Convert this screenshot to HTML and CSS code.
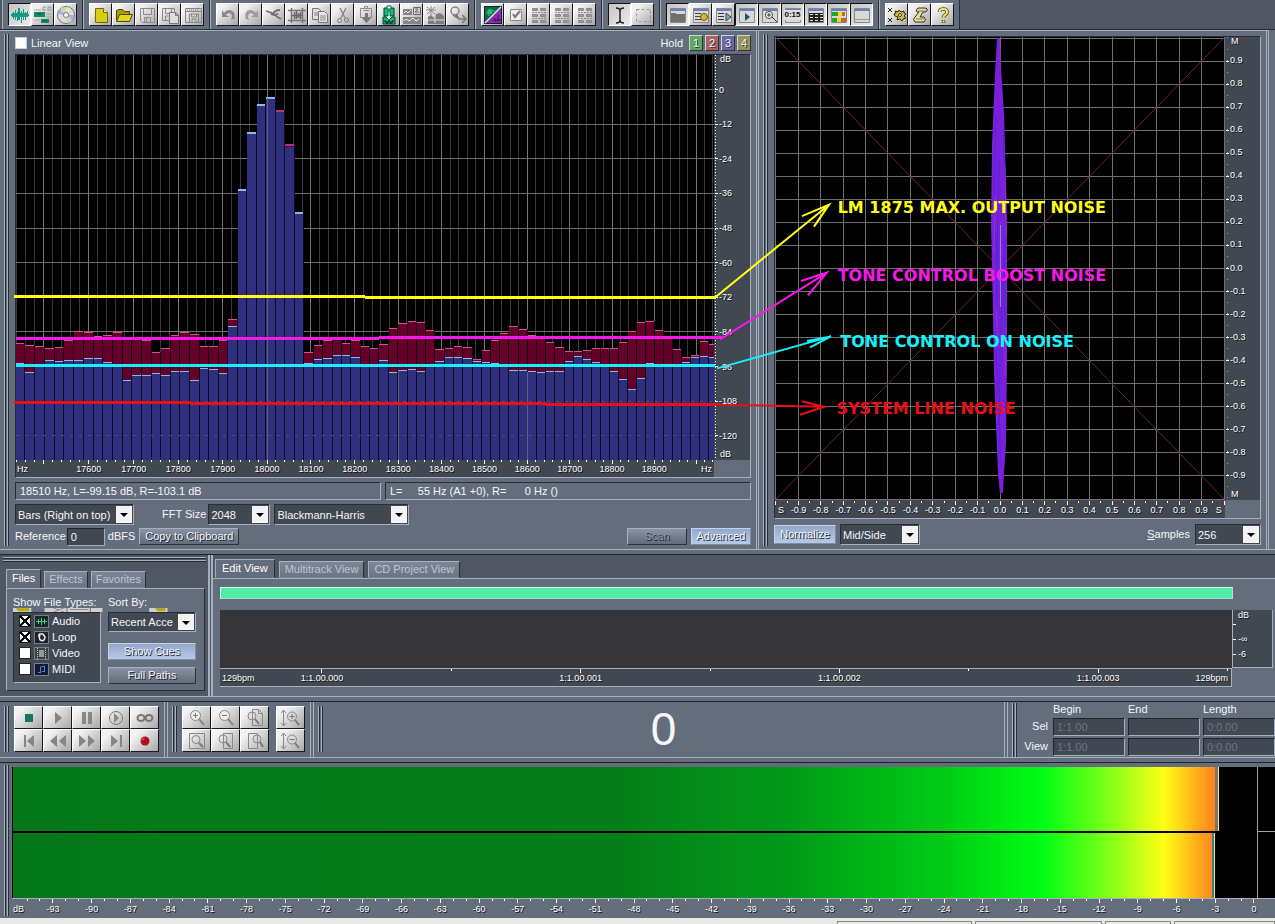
FILE: index.html
```html
<!DOCTYPE html>
<html lang="en">
<head>
<meta charset="utf-8">
<title>Audio Editor</title>
<link rel="stylesheet" href="styles.css">
</head>
<body>
<svg class="sprite" aria-hidden="true">
  <defs>
    <symbol id="wave" viewBox="0 0 20 20"><path d="M1 9h18v2H1zM3 7h1v7H3zM5 5h1v10H5zM7 7h1v9H7zM8 3h2v12H8zM11 6h1v12h-1zM13 4h1v11h-1zM15 7h1v8h-1zM17 6h1v6h-1zM2 8h16v4H2z" fill="#159a86"/></symbol>
    <symbol id="tracks" viewBox="0 0 20 20"><path d="M1 7h11v5H1zM8 14h8v4H8z" fill="#128a70"/><path d="M4 9h5M10 16h4" stroke="#06503e"/><path d="M10 2h3M10 5h3M10 2v3M15 2h3v3h-3z" stroke="#999" fill="none"/><path d="M1 5h7M13 9h6M13 12h6M1 15h6M17 16h2" stroke="#aaa"/></symbol>
    <symbol id="cd" viewBox="0 0 20 20"><circle cx="10" cy="10" r="8.500" fill="#ddd" stroke="#777"/><path d="M10 10L4 4A8 8 0 0 1 9 2z" fill="#a9e8a5"/><path d="M10 10L16 16A8 8 0 0 1 11 18z" fill="#aee5b0"/><path d="M10 10L2 9A8 8 0 0 1 4 5z" fill="#b7a4ef"/><path d="M10 10L18 10A8 8 0 0 1 16 15z" fill="#b4a3ee"/><path d="M10 10L11 2A8 8 0 0 1 15 4z" fill="#eee9a5"/><circle cx="10" cy="10" r="2.500" fill="#fff" stroke="#777"/></symbol>
    <symbol id="new" viewBox="0 0 20 20"><path d="M4.500 3.500h8l4 4v10h-12z" fill="#d8cc16" stroke="#716a00"/><path d="M12.500 3.500v4h4" fill="#fff9a0" stroke="#716a00"/></symbol>
    <symbol id="open" viewBox="0 0 20 20"><path d="M2.500 15.500v-10l2-1h4l2 2h5v3" fill="#a89c00" stroke="#4c4700"/><path d="M2.500 16.500l3-7h13l-3 7z" fill="#e0d61c" stroke="#4c4700"/></symbol>
    <symbol id="save" viewBox="0 0 20 20"><path d="M3.500 3.500h14v14h-12l-2-2zM6.500 3.500v6h8v-6M7.500 17.500v-5h6v5M9.500 13v4" fill="none" stroke="#8b8b8b"/></symbol>
    <symbol id="saveas" viewBox="0 0 20 20"><path d="M8.500 15.500h-6v-12h12v3M5.500 3.500v5h6v-5M5.500 15v-4h3" fill="none" stroke="#888"/><path d="M9.500 7.500h6l3 3v8h-9zM15.500 7.500v3h3" fill="#ddd" stroke="#777"/></symbol>
    <symbol id="saveall" viewBox="0 0 20 20"><path d="M2.500 3.500h16v14h-16zM2 6.500h16M6.500 17v-8h9v8M8.500 9v3h5v-3M9 17v-3h4v3" fill="none" stroke="#888"/><path d="M4 5h12" stroke="#666" stroke-dasharray="1 1"/></symbol>
    <symbol id="undo" viewBox="0 0 20 20"><path d="M4 5v7h7l-3-2c3-4 8-1 5 5l3-1c3-8-5-12-10-6z" fill="#8a8a8a"/></symbol>
    <symbol id="redo" viewBox="0 0 20 20"><path d="M17 5v7h-7l3-2c-3-4-8-1-5 5l-3-1c-3-8 5-12 10-6z" fill="#9b9b9b"/></symbol>
    <symbol id="repeat" viewBox="0 0 20 20"><path d="M2 6l6 2 4 3 5 3" fill="none" stroke="#707070" stroke-width="1.500"/><path d="M16 5q-6 0-7 5M7 8.500q3 3 7 0" fill="none" stroke="#707070" stroke-width="2"/></symbol>
    <symbol id="trim" viewBox="0 0 20 20"><path d="M1 5.500h18M1 15.500h18M4.500 3v15M15.500 3v15" stroke="#777" stroke-width="1.500"/><path d="M5 10.500h10M7.500 7v7M9.500 6v8M11.500 8v5M13.500 7v7" stroke="#666" stroke-width="1.500"/></symbol>
    <symbol id="copy" viewBox="0 0 20 20"><path d="M2.500 3.500h6l3 3v8h-9z" fill="#ddd" stroke="#777"/><path d="M8.500 6.500h6l3 3v8h-9z" fill="#e8e8e8" stroke="#777"/><path d="M4 8h4M4 10h4M10 11h6M10 13h6M10 15h6" stroke="#888"/></symbol>
    <symbol id="cut" viewBox="0 0 20 20"><path d="M7 3l5 10M13 3L8 13" stroke="#888" stroke-width="1.400"/><circle cx="6.500" cy="15.500" r="2" fill="none" stroke="#777"/><circle cx="13.500" cy="15" r="2" fill="none" stroke="#777"/></symbol>
    <symbol id="paste" viewBox="0 0 20 20"><path d="M4.500 3.500h11v9h-11zM7 5.500h6M8.500 3V1.500h3V3" fill="none" stroke="#888"/><path d="M9 8h3v5h3l-4.500 5L6 13h3z" fill="#777"/></symbol>
    <symbol id="pastenew" viewBox="0 0 20 20"><path d="M5 3h10v8H5zM4 12h12v7H4z" fill="#12bf75" stroke="#033c24"/><path d="M8 1h4v3H8zM9 6h2v5h3l-4 4-4-4h3z" fill="#fff" stroke="#064"/><path d="M5 16h2v2h2v-2h2v2h2v-2h2" fill="none" stroke="#012"/></symbol>
    <symbol id="mixpaste" viewBox="0 0 20 20"><path d="M1 4h9v6H1zM1 12h18v7H1z" fill="#858585"/><path d="M2 8l2-2 2 2 3-3M2 16l2-2 3 2 4-3 3 3 3-2" stroke="#eee" fill="none"/><path d="M11.500 2.500h7v7h-7zM13 4h3l-3 3h4" fill="none" stroke="#666"/></symbol>
    <symbol id="deletesel" viewBox="0 0 20 20"><path d="M6 1v9M1 5h10M2 2l8 7M10 2L2 9" stroke="#888"/><path d="M3 12l3-2 3 3 2-4 4-1 4 3v8H3z" fill="#7d7d7d"/><path d="M3 15h16M10 10v8" stroke="#ddd"/></symbol>
    <symbol id="convert" viewBox="0 0 20 20"><circle cx="7" cy="6" r="4" fill="none" stroke="#888" stroke-width="1.500"/><path d="M5 10l5 3M8 9l3 5h6M14 10l4 4-4 4" fill="none" stroke="#777" stroke-width="1.500"/></symbol>
    <symbol id="spectral" viewBox="0 0 20 20"><path d="M1 1h18v18H1z" fill="#171a38"/><path d="M2 2h15L2 17z" fill="#126b45"/><path d="M18 3v15H3z" fill="#8d2ba8"/><path d="M2 18L18 2" stroke="#e9e9ff" stroke-width="1.500"/><path d="M3 8h6M6 4v7M8 4v5M4 6h8" stroke="#37d788"/><path d="M10 15h8M12 13v4M15 10v7" stroke="#3f1460"/></symbol>
    <symbol id="check" viewBox="0 0 20 20"><path d="M4.500 4.500h11v11h-11z" fill="#eee" stroke="#888"/><path d="M7 9l2 3 5-6" fill="none" stroke="#777" stroke-width="2"/></symbol>
    <symbol id="grid6" viewBox="0 0 20 20"><g fill="#999" stroke="#8a8a8a"><path d="M3.500 3.500h5v2h-5zM11.500 3.500h5v2h-5zM3.500 9.500h5v2h-5zM11.500 9.500h5v2h-5zM3.500 15.500h5v2h-5zM11.500 15.500h5v2h-5z"/></g><path d="M3 7.500h14M3 13.500h14" stroke="#888" stroke-dasharray="2 1"/></symbol>
    <symbol id="ibeam" viewBox="0 0 20 20"><path d="M6 3q4 0 4 3 0-3 4-3M10 5v11M6 18q4 0 4-3 0 3 4 3" fill="none" stroke="#222" stroke-width="1.500"/></symbol>
    <symbol id="marquee" viewBox="0 0 20 20"><path d="M3.500 4.500h14v12h-14z" fill="none" stroke="#999" stroke-dasharray="3 2"/></symbol>
    <symbol id="window" viewBox="0 0 20 20"><path d="M2.500 3.500h15v14h-15z" fill="#d8d8d8" stroke="#888"/><path d="M3 4h14v2H3z" fill="#6380c0"/></symbol>
    <symbol id="folderwin" viewBox="0 0 20 20"><use href="#window"/><path d="M3 8h5v1h9v8H3z" fill="#707070"/></symbol>
    <symbol id="cuewin" viewBox="0 0 20 20"><use href="#window"/><path d="M4 8.500h6M4 11.500h6M4 14.500h6" stroke="#444"/><circle cx="13" cy="12" r="3.500" fill="#d0bd28" stroke="#665700"/></symbol>
    <symbol id="listwin" viewBox="0 0 20 20"><use href="#window"/><path d="M4 8.500h6M4 11.500h6M4 14.500h6" stroke="#333"/><path d="M12 8l5 4-5 4z" fill="#86a1a8" stroke="#345"/></symbol>
    <symbol id="playwin" viewBox="0 0 20 20"><use href="#window"/><path d="M8 8l5 4-5 4z" fill="#155b5c"/></symbol>
    <symbol id="zoomwin" viewBox="0 0 20 20"><use href="#window"/><circle cx="9" cy="10" r="3.500" fill="#fff" stroke="#444"/><path d="M7 10h4M9 8v4M12 12l5 5" stroke="#333"/></symbol>
    <symbol id="timewin" viewBox="0 0 20 20"><use href="#window"/></symbol>
    <symbol id="gridwin" viewBox="0 0 20 20"><use href="#window"/><path d="M3 8h14v9H3z" fill="#222"/><path d="M4 9.500h3M9 9.500h3M14 9.500h3M4 12.500h3M9 12.500h3M14 12.500h3M4 15.500h3M9 15.500h3M14 15.500h3" stroke="#ddd"/></symbol>
    <symbol id="levelwin" viewBox="0 0 20 20"><use href="#window"/><path d="M3 7h6v4H3zM3 13h5v4H3z" fill="#25a52b"/><path d="M9 7h4v4H9zM8 13h4v4H8z" fill="#e0df2b"/><path d="M13 7h3v4h-3zM12 13h5v4h-5z" fill="#de5b25"/></symbol>
    <symbol id="statuswin" viewBox="0 0 20 20"><use href="#window"/><path d="M3 14.500h14" stroke="#999"/></symbol>
    <symbol id="settings" viewBox="0 0 20 20"><path d="M1 3l4 4M5 3L1 7M1 13l4 4M5 13l-4 4" stroke="#222"/><path d="M7 9l2-1-1-2 3 1 1-2 2 2 3-1v2l2 1-2 2 2 2-3 1-1 2-2-2-3 1 1-3-3-1z" fill="#cebd40" stroke="#2c2909"/><circle cx="13" cy="10" r="1.500" fill="#fff" stroke="#333"/></symbol>
    <symbol id="script" viewBox="0 0 20 20"><path d="M8 3h7q3 0 2 3l-2 1h-2l-3 5h4q3 3 0 5H5q-3-2 0-5l4-5H7q-2-2 1-4z" fill="#eadc9c" stroke="#333"/><path d="M8 6h7M6 14h8" stroke="#8e7e2f"/></symbol>
    <symbol id="help" viewBox="0 0 20 20"><path d="M6.500 7q0-3 4-3T14 7q0 2-2 3-1.500 1-1.500 3M10.500 15v3" fill="none" stroke="#574c00" stroke-width="3.600"/><path d="M6.500 7q0-3 4-3T14 7q0 2-2 3-1.500 1-1.500 3M10.500 15.500v2" fill="none" stroke="#f1e786" stroke-width="2"/></symbol>
    <symbol id="stop" viewBox="0 0 20 20"><path d="M6 6h8v8H6z" fill="#157463"/></symbol>
    <symbol id="play" viewBox="0 0 20 20"><path d="M7 4l7 6-7 6z" fill="#838383"/></symbol>
    <symbol id="pause" viewBox="0 0 20 20"><path d="M5 4h4v12H5zM11 4h4v12h-4z" fill="#888"/></symbol>
    <symbol id="playcircle" viewBox="0 0 20 20"><circle cx="10" cy="10" r="6.500" fill="none" stroke="#777"/><path d="M8 5l5 5-5 5z" fill="#888"/></symbol>
    <symbol id="loop" viewBox="0 0 20 20"><ellipse cx="6" cy="10" rx="3.500" ry="3" fill="none" stroke="#777" stroke-width="2"/><ellipse cx="14" cy="10" rx="3.500" ry="3" fill="none" stroke="#777" stroke-width="2"/></symbol>
    <symbol id="start" viewBox="0 0 20 20"><path d="M5 4h2v12H5zM15 4v12l-7-6z" fill="#858585"/></symbol>
    <symbol id="rewind" viewBox="0 0 20 20"><path d="M9 4v12l-7-6zM18 4v12l-7-6z" fill="#858585"/></symbol>
    <symbol id="forward" viewBox="0 0 20 20"><path d="M2 4v12l7-6zM11 4v12l7-6z" fill="#858585"/></symbol>
    <symbol id="end" viewBox="0 0 20 20"><path d="M5 4v12l7-6zM14 4h2v12h-2z" fill="#858585"/></symbol>
    <symbol id="record" viewBox="0 0 20 20"><circle cx="10" cy="10" r="4.500" fill="#a9121b"/><path d="M7 6l3 1-1 2-3 1z" fill="#dc3b48"/></symbol>
    <symbol id="zoomin" viewBox="0 0 20 20"><circle cx="8.500" cy="7.500" r="5" fill="#eee" stroke="#888"/><path d="M6 7.500h5M8.500 5v5" stroke="#777"/><path d="M12 11l5 6" stroke="#888" stroke-width="2"/></symbol>
    <symbol id="zoomout" viewBox="0 0 20 20"><circle cx="8.500" cy="7.500" r="5" fill="#eee" stroke="#888"/><path d="M6 7.500h5" stroke="#777"/><path d="M12 11l5 6" stroke="#888" stroke-width="2"/></symbol>
    <symbol id="zoomfull" viewBox="0 0 20 20"><path d="M7.500 1.500h6l4 4v12h-10zM13.500 1.500v4h4" fill="none" stroke="#888"/><circle cx="7" cy="8" r="4" fill="none" stroke="#888"/><path d="M10 11l4 5" stroke="#777" stroke-width="2"/></symbol>
    <symbol id="zoomsel" viewBox="0 0 20 20"><path d="M2.500 2.500h15v15h-15z" fill="none" stroke="#888"/><circle cx="9" cy="8.500" r="4" fill="none" stroke="#888"/><path d="M12 12l4 4" stroke="#777" stroke-width="2"/></symbol>
    <symbol id="zoomleft" viewBox="0 0 20 20"><path d="M7.500 2.500h9v15h-9z" fill="none" stroke="#888"/><circle cx="7" cy="8" r="4" fill="none" stroke="#888"/><path d="M10 11l4 5" stroke="#777" stroke-width="2"/></symbol>
    <symbol id="zoomright" viewBox="0 0 20 20"><path d="M3.500 2.500h9v15h-9z" fill="none" stroke="#888"/><circle cx="12" cy="8" r="4" fill="none" stroke="#888"/><path d="M15 11l3 5" stroke="#777" stroke-width="2"/></symbol>
    <symbol id="vzoomin" viewBox="0 0 20 20"><path d="M2.500 2v16M0 5l2.500-3L5 5M0 15l2.500 3L5 15" fill="none" stroke="#888"/><circle cx="11" cy="8.500" r="4.500" fill="none" stroke="#888"/><path d="M8.500 8.500h5M11 6v5" stroke="#777"/><path d="M14 12l4 5" stroke="#777" stroke-width="2"/></symbol>
    <symbol id="vzoomout" viewBox="0 0 20 20"><path d="M2.500 2v16M0 5l2.500-3L5 5M0 15l2.500 3L5 15" fill="none" stroke="#888"/><circle cx="11" cy="8.500" r="4.500" fill="none" stroke="#888"/><path d="M8.500 8.500h5" stroke="#777"/><path d="M14 12l4 5" stroke="#777" stroke-width="2"/></symbol>
  </defs>
</svg>

<div class="app">
  <header class="toolbar" id="toolbar"></header>

  <main class="analysis">
    <section class="panel">
      <div class="grip"></div>
      <div class="panel-body">
        <div class="plot-head">
          <label class="check-label"><input type="checkbox" class="box">Linear View</label>
          <div class="hold"><span>Hold</span>
            <button class="hold-btn h1">1</button><button class="hold-btn h2">2</button><button class="hold-btn h3">3</button><button class="hold-btn h4">4</button>
          </div>
        </div>
        <div class="frame spectrum">
          <svg class="plot" id="spec-plot"></svg>
          <svg class="axis" id="spec-y"></svg>
          <svg class="axis" id="spec-x"></svg>
        </div>
        <div class="readouts">
          <output class="sunken">18510 Hz, L=-99.15 dB, R=-103.1 dB</output>
          <output class="sunken">L=&nbsp;&nbsp;&nbsp;&nbsp; 55 Hz (A1 +0), R=&nbsp;&nbsp;&nbsp;&nbsp;&nbsp; 0 Hz ()</output>
        </div>
        <div class="controls">
          <span class="combo w-bars"><select aria-label="Display style"><option>Bars (Right on top)</option></select></span>
          <label class="fft" for="fft">FFT Size</label>
          <span class="combo w-fft"><select id="fft"><option>2048</option></select></span>
          <span class="combo w-window"><select aria-label="Window"><option>Blackmann-Harris</option></select></span>
        </div>
        <div class="controls reference">
          <label for="ref">Reference</label>
          <input class="field w-ref" id="ref" value="0">
          <span class="unit">dBFS</span>
          <button class="btn w-copy">Copy to Clipboard</button>
          <button class="btn w-small push dim">Scan</button>
          <button class="btn w-small lit">Advanced</button>
        </div>
      </div>
    </section>
    <section class="panel phase">
      <div class="grip"></div>
      <div class="panel-body">
        <div class="frame phase-frame">
          <svg class="plot" id="phase-plot"></svg>
          <svg class="axis" id="phase-y"></svg>
          <svg class="axis" id="phase-x"></svg>
        </div>
        <div class="controls phase-controls">
          <button class="btn w-norm lit">Normalize</button>
          <span class="combo w-mid"><select aria-label="Mode"><option>Mid/Side</option></select></span>
          <label class="push" for="samples"><u>S</u>amples</label>
          <span class="combo w-samples"><select id="samples"><option>256</option></select></span>
        </div>
      </div>
    </section>
    <svg class="notes" viewBox="0 0 1275 520" preserveAspectRatio="none" aria-hidden="true">
      <g fill="none" stroke-width="3" shape-rendering="crispEdges">
        <path stroke="#ffff18" d="M14 267.500H365L375 268.500H716"/>
        <path stroke="#f818e8" d="M16 309.500H370L380 308.500H722"/>
        <path stroke="#18f0f8" d="M16 336.500H715"/>
        <path stroke="#e81018" d="M14 373.500H190L192 374.500H545L547 375.500H716"/>
      </g>
      <g fill="none" stroke-width="2">
        <path stroke="#ffff18" d="M715 268L829 175M802 186.500L829 175L814 197"/>
        <path stroke="#f818e8" d="M720 310L827 243M801 251.500L827 243L808 266"/>
        <path stroke="#18f0f8" d="M717 339L831 307M807 311.500L831 307L810 318"/>
        <path stroke="#e81018" d="M715 375.500L775 376.500L824 377.500M802 372L824 377.500L800 385.500"/>
      </g>
    </svg>
    <svg class="notes note-text">
      <text x="65.700%" y="183" fill="#ffff18">LM 1875 MAX. OUTPUT NOISE</text>
      <text x="65.700%" y="251" fill="#f818e8">TONE CONTROL BOOST NOISE</text>
      <text x="65.900%" y="317" fill="#18f0f8">TONE CONTROL ON NOISE</text>
      <text x="65.600%" y="384" fill="#e81018">SYSTEM LINE NOISE</text>
    </svg>
  </main>

  <div class="splitter"></div>

  <section class="workspace">
    <aside class="organizer">
      <div class="hgrip"></div>
      <nav class="tabs small">
        <button class="tab on">Files</button><button class="tab">Effects</button><button class="tab">Favorites</button>
      </nav>
      <div class="files">
        <div class="files-head"><span>Show File Types:</span><span>Sort By:</span></div>
        <svg class="peek" viewBox="0 0 180 5" preserveAspectRatio="none" aria-hidden="true">
          <path d="M0 0h18v5H0zM31 0h57v5H31zM134 0h18v5h-18z" fill="#d0d0d0"/><path d="M3 0h13v4H5zM140 0h10v4h-8z" fill="#b9a91c"/><path d="M40 0l10 5M50 0L40 5M56 2h18M53 0v5M76 0v5" stroke="#777"/>
        </svg>
        <div class="files-cols">
          <div class="types">
            <label><input type="checkbox" class="box" checked><svg viewBox="0 0 13 11"><path d="M0 0h13v11H0z" fill="#1c2529"/><path d="M1 5.500h11M3.500 3v5M6.500 2v7M9.500 3v5" stroke="#36d487"/></svg>Audio</label>
            <label><input type="checkbox" class="box" checked><svg viewBox="0 0 13 11"><path d="M0 0h13v11H0z" fill="#1c2227"/><path d="M4 2h4M4 2v3M5 3c-3 6 5 8 5 2L8 2" fill="none" stroke="#eee" stroke-width="1.500"/></svg>Loop</label>
            <label><input type="checkbox" class="box"><svg viewBox="0 0 13 11"><path d="M0 0h13v11H0z" fill="#3c4044"/><path d="M4 2h5v7H4z" fill="#999"/><path d="M2.500 0v11M10.500 0v11" stroke="#ccc" stroke-dasharray="1 1"/></svg>Video</label>
            <label><input type="checkbox" class="box"><svg viewBox="0 0 13 11"><path d="M0 0h13v11H0z" fill="#111a30"/><path d="M5.500 8V3l4-1v5M3 8.500h3M7 7.500h3" fill="none" stroke="#4a86e0"/></svg>MIDI</label>
          </div>
          <div class="sorting">
            <span class="combo"><select aria-label="Sort By"><option>Recent Acce</option></select></span>
            <button class="btn lit">Show Cues</button>
            <button class="btn">Full Paths</button>
          </div>
        </div>
      </div>
    </aside>
    <div class="editor">
      <nav class="tabs">
        <button class="tab on">Edit View</button><button class="tab">Multitrack View</button><button class="tab">CD Project View</button>
      </nav>
      <div class="edit-body">
        <div class="range"></div>
        <div class="wave-grid">
          <div class="wave"></div>
          <svg class="wave-y" id="wave-y"></svg>
          <svg class="ruler" id="ruler"></svg>
        </div>
      </div>
    </div>
  </section>

  <div class="splitter"></div>

  <section class="transport">
    <div class="dock"><div class="grip"></div><div class="keys five" id="transport"></div></div>
    <div class="dock"><div class="grip"></div><div class="keys three" id="zoom"></div><div class="keys one" id="vzoom"></div></div>
    <div class="dock grow"><div class="grip"></div><output class="clock">0</output></div>
    <div class="dock times"><div class="grip"></div>
      <div class="time-grid">
        <span></span><span>Begin</span><span>End</span><span>Length</span>
        <span class="rl">Sel</span><input class="field" aria-label="Sel Begin" value="1:1.00"><input class="field" aria-label="Sel End"><input class="field" aria-label="Sel Length" value="0:0.00">
        <span class="rl">View</span><input class="field" aria-label="View Begin" value="1:1.00"><input class="field" aria-label="View End"><input class="field" aria-label="View Length" value="0:0.00">
      </div>
    </div>
  </section>

  <div class="splitter"></div>

  <section class="meters">
    <div class="grip"></div>
    <div class="meter-body">
      <svg class="levels" id="levels"></svg>
      <svg class="scale" id="scale"></svg>
    </div>
  </section>
  <footer class="status"><span></span><span></span><span></span><span></span><span></span></footer>
</div>
<script src="app.js"></script>
</body>
</html>
```
FILE: styles.css
```css
:root {
  --panel: #646d7b;
  --deep: #505763;
  --well: #414852;
  --light: #a7b0be;
  --dark: #272d37;
}
*, *::before, *::after { box-sizing: border-box; }
body {
  margin: 0;
  background: var(--panel);
  color: #f4f6fa;
  font: 11px/13px "Liberation Sans", Arial, sans-serif;
}
button, input, select { font: inherit; color: inherit; margin: 0; border-radius: 0; }
button { padding: 0; }
svg { display: block; }
.sprite { position: absolute; width: 0; height: 0; }
.app { display: flex; flex-direction: column; min-height: 100vh; overflow: hidden; }

.toolbar { display: flex; background: var(--deep); padding: 0 2px; border-bottom: 1px solid var(--dark); }
.group { display: flex; background: var(--panel); padding: 3px 5px; border-left: 1px solid var(--light); border-right: 1px solid var(--dark); }
.tool, .key {
  display: grid;
  place-items: center;
  border: 1px solid;
  border-color: #fff #15181c #15181c #fff;
  background: linear-gradient(135deg, #f2f2f2 20%, #a8a8a8);
  color: #111;
}
.tool { width: 23px; height: 23px; }
.tool svg { width: 20px; height: 20px; }
.tool svg, .tool b { grid-area: 1 / 1; }
.tool b { font-size: 8px; line-height: 10px; background: #ddd; align-self: center; }
.tool.on { border-color: #101216 #fff #fff #101216; background: linear-gradient(135deg, #c4c4c4, #ececec); }

.analysis { position: relative; display: grid; grid-template-columns: 759fr 516fr; }
.panel { display: flex; border-top: 1px solid var(--light); padding-right: 5px; border-right: 3px double var(--light); min-width: 0; }
.panel + .panel { margin-right: 6px; }
.panel-body { flex: 1; min-width: 0; padding-bottom: 3px; }
.grip {
  flex: none;
  width: 5px;
  margin: 3px 6px 3px 4px;
  background: linear-gradient(90deg, var(--light) 1px, var(--dark) 1px 2px, transparent 2px 3px, var(--light) 3px 4px, var(--dark) 4px);
}
.plot-head { display: flex; justify-content: space-between; align-items: center; height: 23px; padding-top: 1px; }
.check-label { display: flex; align-items: center; gap: 4px; }
.box { appearance: none; width: 12px; height: 12px; background: #fff; border: 1px solid #222; }
.plot-head .box { border-color: #ccc; }
.box:checked {
  background: linear-gradient(45deg, transparent 42%, #000 42% 58%, transparent 58%), linear-gradient(-45deg, transparent 42%, #000 42% 58%, transparent 58%), #fff;
  border: 1px solid #fff;
  outline: 1px solid #222;
  outline-offset: -1px;
}
.hold { display: flex; align-items: center; gap: 2px; }
.hold span { margin-right: 4px; }
.hold-btn { width: 14px; height: 16px; border: 1px solid; border-color: #c8d8d0 #333 #333 #c8d8d0; line-height: 13px; text-shadow: 1px 1px #333; }
.h1 { background: #5fa966; }
.h2 { background: #ad6268; }
.h3 { background: #6a68ad; }
.h4 { background: #96955c; }

.frame { display: grid; border: 1px solid; border-color: var(--dark) var(--light) var(--light) var(--dark); }
.spectrum { grid-template: 405px 17px / 1fr 36px; }
.phase-frame { grid-template: 463px 18px / 1fr 35px; margin-top: 5px; }
.plot { width: 100%; height: 100%; background: #000; shape-rendering: crispEdges; }
.axis { width: 100%; height: 100%; background: var(--well); }
.axis text, .ruler text, .wave-y text, .scale text { font-size: 9px; fill: #fff; text-shadow: 1px 1px #15181c; }
.axis, .ruler, .scale, .wave-y { shape-rendering: crispEdges; }

.readouts { display: grid; grid-template-columns: 1fr 1fr; gap: 4px; margin-top: 4px; }
.sunken { height: 18px; padding: 2px 4px; border: 1px solid; border-color: var(--dark) var(--light) var(--light) var(--dark); white-space: pre; }
.controls { display: flex; align-items: center; margin-top: 4px; }
.controls.reference { margin-top: 2px; height: 19px; }
.combo { position: relative; display: inline-block; height: 21px; border: 1px solid; border-color: var(--dark) var(--light) var(--light) var(--dark); }
.combo select { appearance: none; width: 100%; height: 19px; border: 0; padding: 1px 17px 0 2px; background: var(--well); }
.combo::before { content: ""; position: absolute; right: 1px; top: 1px; width: 16px; bottom: 1px; background: #f3f3f3; pointer-events: none; }
.combo::after { content: ""; position: absolute; right: 5px; top: 8px; border: 4px solid transparent; border-top-color: #000; border-bottom: 0; pointer-events: none; }
.w-bars { width: 119px; }
.fft { margin: 0 2px 0 28px; }
.w-fft { width: 62px; }
.w-window { width: 135px; margin-left: 4px; }
.field { width: 100%; height: 18px; padding: 0 3px; background: var(--well); border: 1px solid; border-color: #20252d var(--light) var(--light) #20252d; }
.w-ref { width: 38px; margin: 0 3px 0 1px; }
.btn { height: 17px; border: 1px solid; border-color: var(--light) #2c323c #2c323c var(--light); background: linear-gradient(#8792a4, #626c7b); line-height: 15px; text-shadow: 1px 1px #20242c; }
.btn.lit { background: linear-gradient(#93a8cc, #b6c9e8); border-color: #c5d3ea #7e8ca4 #7e8ca4 #c5d3ea; }
.btn.dim { color: #8b94a2; }
.w-copy { width: 100px; margin-left: 4px; }
.w-small { width: 60px; margin-left: 4px; }
.controls .push { margin-left: auto; }
.phase-controls { margin-top: 5px; }
.w-norm { width: 62px; height: 19px; }
.w-mid { width: 80px; margin-left: 4px; }
.w-samples { width: 66px; margin-left: 5px; }
.notes { position: absolute; top: 0; left: 0; width: 100%; height: 100%; pointer-events: none; }
.note-text { font: bold 16px "DejaVu Sans", sans-serif; }

.splitter { height: 6px; flex: none; background: var(--panel); border-top: 1px solid var(--light); border-bottom: 1px solid #1e232b; }

.workspace { display: grid; grid-template-columns: 213px 1fr; background: var(--deep); }
.organizer { padding: 2px 2px 5px 3px; border-right: 5px double var(--light); }
.hgrip { height: 5px; background: linear-gradient(var(--light) 1px, var(--dark) 1px 2px, transparent 2px 3px, var(--light) 3px 4px, var(--dark) 4px); }
.tabs { display: flex; align-items: flex-end; gap: 4px; padding: 4px 0 0 2px; }
.tabs.small { padding: 7px 0 0 3px; gap: 3px; }
.tab { height: 17px; padding: 0 5px; border: 1px solid; border-color: var(--light) var(--dark) transparent var(--light); background: linear-gradient(#7c8696, #6a7483); color: #bcc5d2; line-height: 15px; }
.tab.on { height: 19px; padding: 0 6px; background: var(--panel); color: #fff; }
.small .tab { padding: 0 4px; }
.small .tab.on { padding: 0 5px; }
.files { margin: 0 1px 0 3px; padding: 7px 8px 6px 6px; background: var(--panel); border: 1px solid; border-color: var(--light) var(--dark) var(--dark) var(--light); }
.files-head { display: grid; grid-template-columns: 95px 1fr; height: 12px; white-space: nowrap; }
.peek { width: 100%; height: 4px; }
.files-cols { display: grid; grid-template-columns: 88px 1fr; gap: 7px; }
.types { height: 71px; background: var(--well); border: 1px solid; border-color: var(--dark) var(--light) var(--light) var(--dark); padding: 0 5px; }
.types label { display: flex; align-items: center; gap: 4px; height: 16px; }
.types svg { width: 13px; height: 11px; outline: 1px solid #777f8a; }
.sorting { display: flex; flex-direction: column; gap: 7px; }
.sorting .combo { margin-bottom: 4px; height: 20px; }
.sorting .combo select { height: 18px; }
.editor { display: flex; flex-direction: column; min-width: 0; }
.edit-body { flex: 1; background: var(--panel); border-top: 1px solid var(--light); padding: 8px 2px 8px 7px; }
.range { height: 12px; margin-right: 40px; background: #50eca6; border: 1px solid; border-color: #d8fff0 #c0d8d0 #a9d9c8 #d8fff0; }
.wave-grid { display: grid; grid-template: 58px 19px / 1fr 41px; margin-top: 11px; }
.wave { background: #363639; }
.wave-y { width: 100%; height: 100%; background: var(--well); border: solid var(--light); border-width: 0 1px 1px; }
.ruler { width: 100%; height: 100%; background: var(--well); border: solid var(--light); border-width: 1px 1px 1px 0; }

.transport { display: flex; }
.dock { display: flex; border-right: 4px double var(--light); padding: 4px 5px 5px 0; margin-right: 1px; }
.dock .grip { margin: 0 5px 0 4px; }
.dock + .dock .grip { margin-left: 3px; }
.keys { display: grid; grid-auto-rows: 23px; }
.five { grid-template-columns: repeat(5, 29px); }
.three { grid-template-columns: repeat(3, 29px); margin-right: 7px; }
.one { grid-template-columns: 29px; }
.key svg { width: 20px; height: 20px; }
.grow { flex: 1; }
.clock { flex: 1; text-align: center; font-size: 46px; line-height: 46px; }
.dock.times { border-right: 0; padding: 1px 0 0; margin: 0; }
.time-grid { display: grid; grid-template-columns: 26px repeat(3, 72px); grid-template-rows: 13px 18px 18px; column-gap: 3px; row-gap: 2px; margin-left: 2px; }
.time-grid .field { color: #6e7681; }
.rl { text-align: right; padding: 2px 2px 0 0; }

.meters { display: flex; flex: 1; }
.meters .grip { margin: 2px 3px 2px 4px; }
.meter-body { flex: 1; min-width: 0; display: flex; flex-direction: column; padding-top: 4px; }
.levels { width: 100%; height: 131px; background: #000; shape-rendering: crispEdges; }
.scale { width: 100%; height: 20px; border-top: 1px solid var(--light); }
.status { height: 6px; flex: none; background: #e8e8e6; display: grid; grid-template-columns: 842fr 136fr 128fr 67fr 102fr; gap: 3px; padding-top: 3px; }
.status span { border: 1px solid #888; border-bottom: 0; }
.status span:first-child { border: 0; }
```
FILE: app.js
```js
const byId = id => document.getElementById(id);

// Toolbar groups; a leading "*" marks a pressed button.
const groups = [
  ["*wave", "tracks", "cd"],
  ["new", "open", "save", "saveas", "saveall"],
  ["undo", "redo", "repeat", "trim", "copy", "cut", "paste", "pastenew", "mixpaste", "deletesel", "convert"],
  ["spectral", "check", "grid6", "grid6", "grid6"],
  ["*ibeam", "marquee"],
  ["*folderwin", "cuewin", "listwin", "*playwin", "*zoomwin", "*timewin", "*gridwin", "*levelwin", "*statuswin"],
  ["settings", "script", "help"]
];
const button = (name, cls) => {
  const on = name[0] === "*";
  const id = on ? name.slice(1) : name;
  const extra = id === "timewin" ? "<b>0:15</b>" : "";
  return `<button class="${cls}${on ? " on" : ""}" aria-label="${id}"><svg><use href="#${id}"/></svg>${extra}</button>`;
};
byId("toolbar").innerHTML = groups.map(g => `<div class="group">${g.map(n => button(n, "tool")).join("")}</div>`).join("");
const keys = (id, list) => { byId(id).innerHTML = list.map(n => button(n, "key")).join(""); };
keys("transport", ["stop", "play", "pause", "playcircle", "loop", "start", "rewind", "forward", "end", "record"]);
keys("zoom", ["zoomin", "zoomout", "zoomfull", "zoomsel", "zoomleft", "zoomright"]);
keys("vzoom", ["vzoomin", "vzoomout"]);

const pct = v => (v * 100).toFixed(3) + "%";
const vline = (x, y1, y2, c) => `<line x1="${x}" x2="${x}" y1="${y1}" y2="${y2}" stroke="${c}"/>`;
const hline = (y, x1, x2, c) => `<line x1="${x1}" x2="${x2}" y1="${y}" y2="${y}" stroke="${c}"/>`;
const text = (x, y, s, anchor = "middle") => `<text x="${x}" y="${y}" text-anchor="${anchor}">${s}</text>`;

// Spectrum: logarithmic frequency axis, one bar per FFT bin, values are bar tops in plot rows.
const F0 = 17439.5, F1 = 19043, BIN = 44100 / 2048, FIRST = 809.85;
const fx = f => Math.log(f / F0) / Math.log(F1 / F0);
const dbY = db => 34.5 - db * 34.63 / 12;
const left = [288,290,291,293,292,285,276,277,281,280,277,284,282,285,297,293,280,277,279,291,291,285,264,
  139,79,50,43,55,89,159,297,290,285,282,288,285,291,293,289,273,268,266,267,275,294,293,291,292,304,295,285,
  278,271,274,280,283,287,292,296,296,295,293,293,293,287,276,267,266,275,283,294,302,300,286,289];
const right = [308,317,311,305,306,305,305,303,303,307,311,325,320,320,318,320,316,316,325,313,314,318,271,
  134,77,49,42,57,92,157,308,304,303,300,300,302,309,311,305,317,315,314,316,311,306,302,302,303,306,307,308,
  311,315,315,316,317,316,316,306,301,304,307,311,316,324,334,323,308,309,311,311,307,302,301,302];
let s = "";
for (let f = 17440; f <= F1; f += 20) s += vline(pct(fx(f)), 0, 405, f % 100 ? "#383838" : "#777");
for (let d = 0; d >= -120; d -= 12) s += hline(dbY(d), 0, "100%", "#707070");
left.forEach((l, i) => {
  const a = fx((FIRST + i) * BIN), b = fx((FIRST + i + 1) * BIN);
  const x = i ? a : 0, w = b - x - 1 / 700, r = right[i];
  const carrier = i >= 23 && i <= 29;
  const rect = (y, h, c, width = w) => `<rect x="${pct(x)}" width="${pct(width)}" y="${y}" height="${h}" fill="${c}"/>`;
  s += rect(Math.min(l, r), 405, "#0a0a28", b - x);
  if (l < r) s += rect(l, r - l, "#660028") + rect(l, 1, "#d8508c");
  s += rect(r, 405, "#302f7e") + (i === 27 || i === 28 ? rect(l, 2, "#b0308c") : rect(r, carrier ? 2 : 1, "#8cb8ee"));
});
[[18000, 43], [18300, 317], [18600, 317]].forEach(([f, y]) => { s += vline(pct(fx(f)), y, 405, "#60607e"); });
[-108, -120].forEach(d => { s += `<line x1="0" x2="100%" y1="${dbY(d)}" y2="${dbY(d)}" stroke="#50506e" stroke-dasharray="3 6"/>`; });
byId("spec-plot").innerHTML = s;

s = vline(1.5, 0, 405, "#fff").replace("/>", ' stroke-dasharray="1 2"/>');
s += text(6, 7, "dB", "start") + text(6, 402, "dB", "start");
for (let d = 0; d >= -120; d -= 12) s += hline(dbY(d), 1, 4, "#fff") + text(5, dbY(d) + 3, d, "start");
byId("spec-y").innerHTML = s;

s = text(1, 12, "Hz", "start") + text("99.700%", 12, "Hz", "end");
for (let f = 17440; f <= F1; f += 20) s += vline(pct(fx(f)), 0, f % 100 ? 2 : 4, "#fff");
for (let f = 17600; f <= 18900; f += 100) s += text(pct(fx(f)), 12, f);
byId("spec-x").innerHTML = s;

// Phase plot
s = "";
for (let i = 0; i <= 20; i++) s += vline(pct((1 + i * 22.4) / 450), 0, 463, "#707070") + hline(1 + i * 23.05, 0, "100%", "#707070");
s += `<svg viewBox="0 0 450 463" width="100%" height="463" preserveAspectRatio="none" shape-rendering="auto">
<path d="M1 1L449 462M449 1L1 462" stroke="#702428" fill="none"/>
<path d="M222 1h3l1 30 3 45 2 70 1 40v140l-1 80-2 30-1 19-3 2-2-20-2-50-2-50-1-60-2-90 1-80 3-70z" fill="#7a20dc"/>
<path d="M221 80l-2 90 3 60M228 100l3 70-2 80 2 70M224 120l-3 190 4 100M227 240l-3 130 2 60" stroke="#4b28d8" fill="none"/>
<path d="M220 160l-1 55M230 130l1 70M221 270l2 40M231 290l-1 50" stroke="#a02cc8" fill="none"/>
<path d="M225.500 188v82" stroke="#9485c8"/></svg>`;
byId("phase-plot").innerHTML = s;

s = vline(2.5, 0, 463, "#aaa").replace("/>", ' stroke-dasharray="1 10.500"/>') + text(6, 7, "M", "start") + text(6, 460, "M", "start");
for (let i = 1; i < 20; i++) {
  const y = 1 + i * 23.05;
  s += hline(y, 1, 4, "#fff") + text(5, y + 2, ((10 - i) / 10).toFixed(1), "start");
}
byId("phase-y").innerHTML = s;
s = text(3, 13, "S", "start") + text("99.300%", 13, "S", "end");
for (let i = 0; i <= 40; i++) s += vline(pct((1 + i * 11.2) / 450), 1, i % 2 ? 3 : 5, "#fff");
for (let i = 1; i < 20; i++) s += text(pct((1 + i * 22.4) / 450), 13, ((i - 10) / 10).toFixed(1));
byId("phase-x").innerHTML = s;

// Edit view rulers
s = text(2, 12, "129bpm", "start") + text("99.700%", 12, "129bpm", "end");
for (let i = 0; i < 4; i++) {
  const x = (102 + i * 259) / 1012;
  s += vline(pct(x), 0, 4, "#fff") + vline(pct(x + 129.5 / 1012), 0, 2, "#fff") + text(pct(x), 12, "1:1.00.00" + i);
}
byId("ruler").innerHTML = s;
s = text(5, 8, "dB", "start") + text(5, 32, "-∞", "start") + text(5, 47, "-6", "start");
[14.5, 29.5, 44.5].forEach(y => { s += hline(y, 0, 3, "#fff"); });
byId("wave-y").innerHTML = s;

// Level meters
s = `<defs><linearGradient id="lv" gradientUnits="userSpaceOnUse" x1="0" x2="95.400%">
<stop offset="0" stop-color="#047818"/><stop offset=".5" stop-color="#047e18"/><stop offset=".64" stop-color="#02981a"/>
<stop offset=".77" stop-color="#00ca14"/><stop offset=".857" stop-color="#00ff14"/><stop offset=".915" stop-color="#8cff18"/>
<stop offset=".956" stop-color="#ffff14"/><stop offset="1" stop-color="#ff7c20"/></linearGradient></defs>
<rect x="1" width="95.200%" height="64" fill="url(#lv)"/><rect x="1" y="66" width="95%" height="65" fill="url(#lv)"/>
<rect x="95.250%" width="3" height="64" fill="#7c7468"/><rect x="95.490%" width="1" height="64" fill="#f0e890"/>
<rect x="95%" y="66" width="2" height="65" fill="#407a88"/><rect x="95.200%" y="66" width="1" height="65" fill="#f8e870"/>`;
s += vline("98.600%", 0, 131, "#a0a4b0") + hline(64.5, "98.600%", "100%", "#a0a4b0");
byId("levels").innerHTML = s;
s = text(1, 13, "dB", "start");
for (let d = -95; d <= 0; d++) s += vline(pct((1242 + d * 12.915) / 1263), 0, d % 3 ? 2 : 4, "#fff");
for (let d = -93; d <= 0; d += 3) s += text(pct((1242 + d * 12.915) / 1263), 13, d);
byId("scale").innerHTML = s;
```
